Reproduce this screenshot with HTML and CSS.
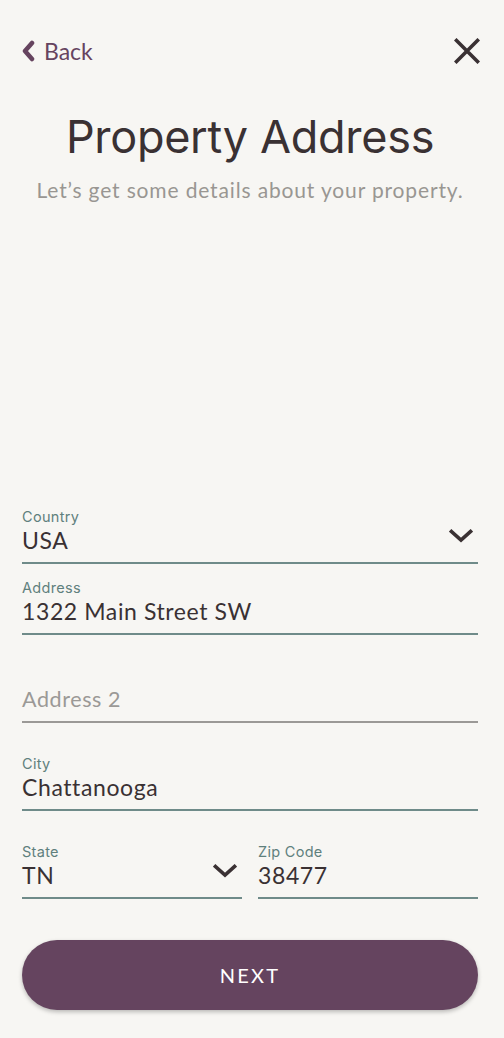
FILE: index.html
```html
<!DOCTYPE html>
<html lang="en">
<head>
<meta charset="utf-8">
<title>Property Address</title>
<link rel="stylesheet" href="styles.css">
</head>
<body>
<div class="screen">
  <header class="topbar">
    <a class="back" href="#">
      <svg class="back-icon" viewBox="0 0 14 22" width="14" height="22"><path d="M11 3 L4 11 L11 19" fill="none" stroke="#66445f" stroke-width="4.5" stroke-linecap="round" stroke-linejoin="round"/></svg>
      <span>Back</span>
    </a>
    <button class="close" aria-label="Close">
      <svg viewBox="0 0 26 26" width="26" height="26"><path d="M2.5 2.5 L23.5 23.5 M23.5 2.5 L2.5 23.5" fill="none" stroke="#3a3133" stroke-width="3.6" stroke-linecap="square"/></svg>
    </button>
  </header>

  <h1 class="title">Property Address</h1>
  <p class="subtitle">Let’s get some details about your property.</p>

  <form class="form">
    <div class="group">
      <div class="field">
        <div class="label">Country</div>
        <div class="value-row">
          <span class="value">USA</span>
          <svg class="chev" viewBox="0 0 24 14" width="24" height="14"><path d="M2.5 2.5 L12 11 L21.5 2.5" fill="none" stroke="#3a3133" stroke-width="3.6" stroke-linecap="square"/></svg>
        </div>
      </div>
      <div class="field">
        <div class="label">Address</div>
        <div class="value-row"><span class="value">1322 Main Street SW</span></div>
      </div>
    </div>
    <div class="field empty">
      <div class="label"></div>
      <div class="value-row"><span class="placeholder">Address 2</span></div>
    </div>
    <div class="field">
      <div class="label">City</div>
      <div class="value-row"><span class="value">Chattanooga</span></div>
    </div>
    <div class="row">
      <div class="field">
        <div class="label">State</div>
        <div class="value-row">
          <span class="value">TN</span>
          <svg class="chev" viewBox="0 0 24 14" width="24" height="14"><path d="M2.5 2.5 L12 11 L21.5 2.5" fill="none" stroke="#3a3133" stroke-width="3.6" stroke-linecap="square"/></svg>
        </div>
      </div>
      <div class="field">
        <div class="label">Zip Code</div>
        <div class="value-row"><span class="value">38477</span></div>
      </div>
    </div>
    <button type="button" class="next">NEXT</button>
  </form>
</div>
</body>
</html>
```

FILE: styles.css
```css
* { box-sizing: border-box; }
html, body { margin: 0; padding: 0; }
body {
  background: #f7f6f3;
  font-family: "Lato", "Liberation Sans", sans-serif;
  color: #3a3133;
}
.screen {
  min-height: 1038px;
  display: flex;
  flex-direction: column;
  padding: 0 26px 28px 22px;
}
.topbar {
  display: flex;
  justify-content: space-between;
  align-items: center;
  height: 44px;
  margin-top: 29px;
}
.back {
  display: flex;
  align-items: center;
  gap: 9px;
  color: #66445f;
  text-decoration: none;
  font-size: 23px;
  font-family: "Lato", sans-serif;
}
.back-icon { margin-left: -1px; }
.close {
  background: none;
  border: 0;
  padding: 0;
  margin-right: -2px;
  display: flex;
}
.title {
  margin: 36px 0 0;
  text-align: center;
  font-family: "Inter", "Roboto", sans-serif;
  font-weight: 400;
  font-size: 45px;
  line-height: 56px;
  letter-spacing: -0.3px;
  color: #3a3133;
}
.subtitle {
  margin: 12px 0 0;
  text-align: center;
  font-size: 21px;
  line-height: 26px;
  letter-spacing: 0.85px;
  color: #999692;
}
.form {
  margin-top: auto;
  display: flex;
  flex-direction: column;
  gap: 33px;
}
.group { display: flex; flex-direction: column; gap: 16px; }
.field {
  border-bottom: 2px solid #6f8b89;
  padding-bottom: 7px;
}
.field.empty { border-bottom-color: #9b9996; }
.label {
  height: 16px;
  font-family: "Inter", "Roboto", sans-serif;
  font-size: 14.5px;
  line-height: 16px;
  letter-spacing: 0.3px;
  color: #5f807d;
}
.value-row {
  height: 30px;
  display: flex;
  align-items: center;
  justify-content: space-between;
}
.value {
  font-size: 23px;
  letter-spacing: 0.6px;
  color: #3a3133;
}
.placeholder {
  font-size: 21.5px;
  letter-spacing: 0.6px;
  color: #9b9996;
}
.chev { margin-right: 5px; margin-top: -8px; }
.row {
  display: grid;
  grid-template-columns: 1fr 1fr;
  gap: 16px;
}
.next {
  margin-top: 8px;
  height: 70px;
  border: 0;
  border-radius: 35px;
  background: #65445f;
  color: #ffffff;
  font-family: "Lato", sans-serif;
  font-size: 20px;
  letter-spacing: 2.2px;
  box-shadow: 0 2px 4px rgba(0,0,0,0.25);
}
```
